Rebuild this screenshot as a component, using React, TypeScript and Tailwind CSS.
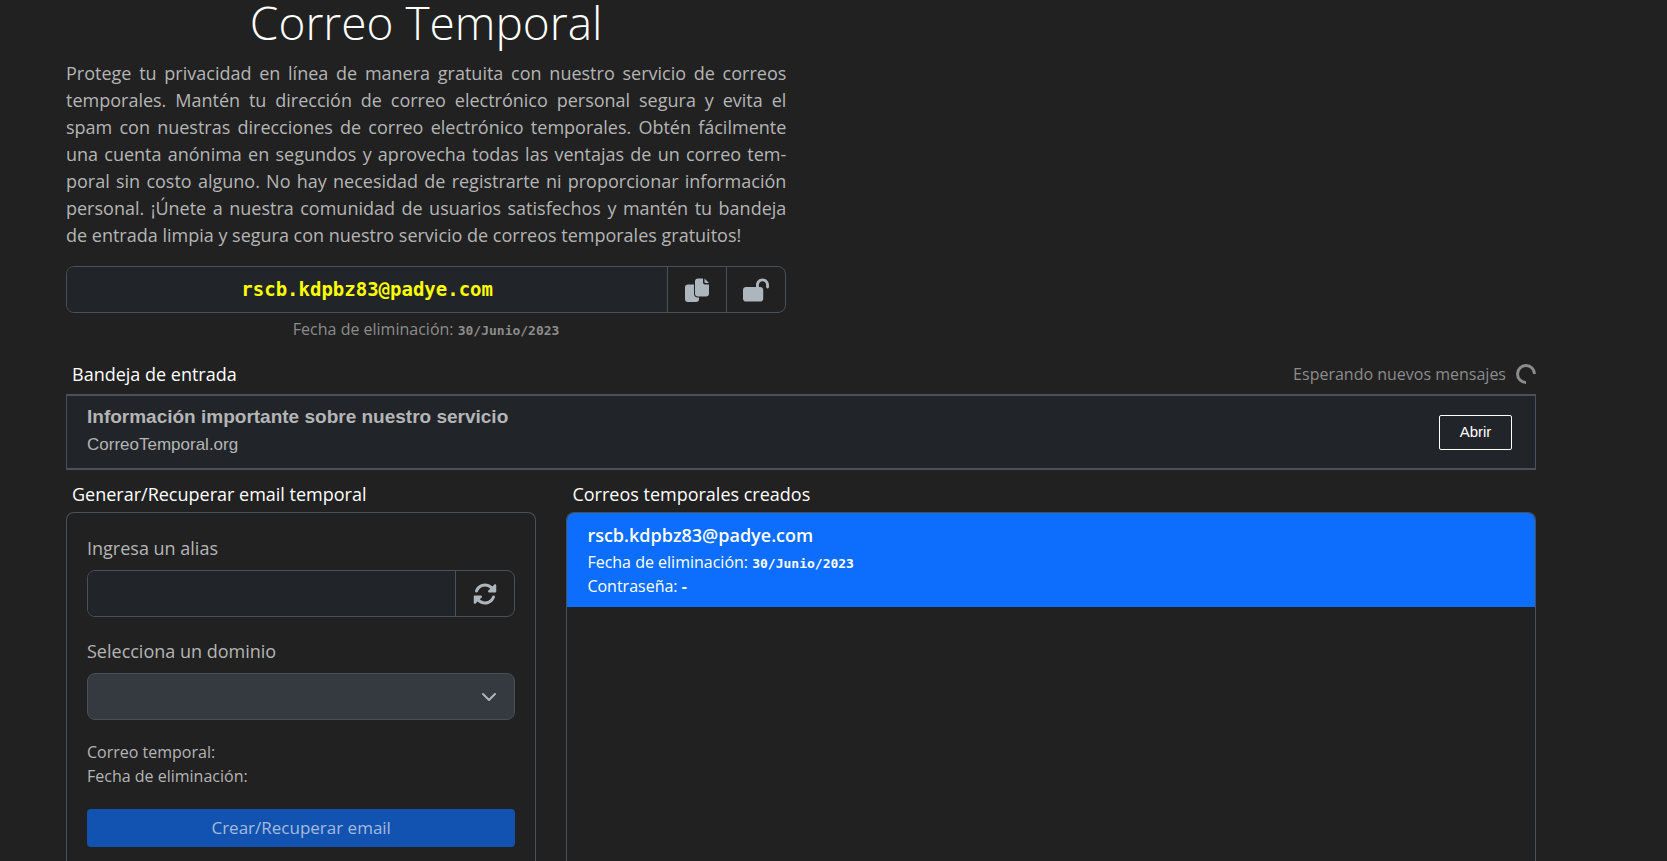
import React, { useState } from 'react';
import { FaLockOpen, FaRotate } from 'react-icons/fa6';

interface TempMail {
  address: string;
  expires: string;
  password: string;
}

const mails: TempMail[] = [
  { address: 'rscb.kdpbz83@padye.com', expires: '30/Junio/2023', password: '-' },
];

const CopyIcon = () => (
  <svg viewBox="0 0 24 24" className="h-6 w-6" fill="currentColor" aria-hidden="true">
    <path d="M3 6.500h6v9a4 4 0 0 0 4 4h1V21a3 3 0 0 1-3 3H3a3 3 0 0 1-3-3V9.500a3 3 0 0 1 3-3z" />
    <path d="M13 .500h5v4a2 2 0 0 0 2 2h4v9a3 3 0 0 1-3 3h-8a3 3 0 0 1-3-3v-12a3 3 0 0 1 3-3z" />
    <path d="M19.500 .500 24 5h-3.500a1 1 0 0 1-1-1z" />
  </svg>
);

const ChevronIcon = () => (
  <svg viewBox="0 0 16 16" className="pointer-events-none absolute top-4 right-[18px] h-4 w-4 text-[#adb5bd]" fill="none" stroke="currentColor" strokeWidth="2" strokeLinecap="round" strokeLinejoin="round" aria-hidden="true">
    <path d="m2 5 6 6 6-6" />
  </svg>
);

const Spinner = () => (
  <svg viewBox="0 0 20 20" className="h-5 w-5" fill="none" stroke="currentColor" strokeWidth="3" aria-hidden="true">
    <path d="M10 18.500A8.500 8.500 0 1 1 18.500 10" />
  </svg>
);

const ExpiryDate = ({ date }: { date: string }) => (
  <span className="font-['DejaVu_Sans_Mono',monospace] text-[13px] font-bold">{date}</span>
);

export default function App() {
  const [alias, setAlias] = useState('');
  const [domain, setDomain] = useState('');
  const current = mails[0];

  return (
    <div className="h-screen overflow-hidden bg-[#212121] pr-[131px] pl-[66px] font-['Open_Sans',sans-serif] text-[#b5b5b5]">
      {/* Intro */}
      <section className="w-[49%]">
        <h1 className="text-center text-[46px] leading-[44px] font-light text-white">Correo Temporal</h1>
        <p lang="es" className="mt-4 text-justify text-lg leading-[27px]">
          Protege tu privacidad en línea de manera gratuita con nuestro servicio de correos temporales. Mantén tu
          dirección de correo electrónico personal segura y evita el spam con nuestras direcciones de correo electrónico
          temporales. Obtén fácilmente una cuenta anónima en segundos y aprovecha todas las ventajas de un correo
          tem&shy;poral sin costo alguno. No hay necesidad de registrarte ni proporcionar información personal. ¡Únete a
          nuestra comunidad de usuarios satisfechos y mantén tu bandeja de entrada limpia y segura con nuestro servicio
          de correos temporales gratuitos!
        </p>

        <div className="mt-[17px] flex h-[47px] overflow-hidden rounded-lg border border-[#495057]">
          <input
            readOnly
            aria-label="Correo temporal"
            value={current.address}
            className="min-w-0 flex-1 bg-[#212529] text-center font-['DejaVu_Sans_Mono',monospace] text-[19px] font-bold text-[#ffff00] outline-none"
          />
          <button type="button" aria-label="Copiar" className="flex w-[59px] items-center justify-center border-l border-[#495057] text-[#adb5bd]">
            <CopyIcon />
          </button>
          <button type="button" aria-label="Proteger" className="flex w-[59px] items-center justify-center border-l border-[#495057] text-[#adb5bd]">
            <FaLockOpen className="h-6 w-[26px]" />
          </button>
        </div>
        <p className="mt-1 text-center text-base leading-6 text-[#8c8c8c]">
          Fecha de eliminación: <ExpiryDate date={current.expires} />
        </p>
      </section>

      {/* Inbox */}
      <section className="mt-[17px]">
        <div className="flex items-center justify-between pl-1.5">
          <h2 className="text-lg leading-7 text-white">Bandeja de entrada</h2>
          <div className="flex items-center gap-2.5 text-base leading-7 text-[#8c8c8c]">
            <span>Esperando nuevos mensajes</span>
            <Spinner />
          </div>
        </div>
        <div className="mt-1.5 flex h-[76px] items-center justify-between border-x border-y-2 border-[#495057] bg-[#212529] pr-[23px] pl-5 font-['Liberation_Sans',sans-serif]">
          <div className="pb-0.5">
            <p className="text-[19px] leading-7 font-bold">Información importante sobre nuestro servicio</p>
            <p className="text-[17px] leading-7">CorreoTemporal.org</p>
          </div>
          <button type="button" className="h-[35px] w-[73px] rounded-xs border border-white text-[15px] text-white">
            Abrir
          </button>
        </div>
      </section>

      <div className="mt-2.5 flex gap-[30px]">
        {/* Generator form */}
        <section className="w-[32%]">
          <h2 className="pl-1.5 text-lg leading-7 text-white">Generar/Recuperar email temporal</h2>
          <form className="mt-1 rounded-t-lg border border-b-0 border-[#495057] px-5 pt-[21px] pb-10" onSubmit={(e) => e.preventDefault()}>
            <label htmlFor="alias" className="block text-lg leading-7">Ingresa un alias</label>
            <div className="mt-2 flex h-[47px] overflow-hidden rounded-lg border border-[#495057]">
              <input
                id="alias"
                value={alias}
                onChange={(e) => setAlias(e.target.value)}
                className="min-w-0 flex-1 bg-[#212529] px-4 text-lg outline-none"
              />
              <button type="button" aria-label="Generar alias" className="flex w-[59px] items-center justify-center border-l border-[#495057] text-[#adb5bd]">
                <FaRotate className="h-6 w-6" />
              </button>
            </div>

            <label htmlFor="domain" className="mt-5 block text-lg leading-7">Selecciona un dominio</label>
            <div className="relative mt-2">
              <select
                id="domain"
                value={domain}
                onChange={(e) => setDomain(e.target.value)}
                className="block h-[47px] w-full appearance-none rounded-lg border border-[#495057] bg-[#343a40] px-4 text-lg outline-none"
              >
                <option value=""></option>
              </select>
              <ChevronIcon />
            </div>

            <div className="mt-5 text-base leading-6">
              <p>Correo temporal:</p>
              <p>Fecha de eliminación:</p>
            </div>
            <button type="submit" disabled className="mt-[21px] h-[38px] w-full rounded-sm bg-[#1253b1] text-[17px] text-[#a6bbdb]">
              Crear/Recuperar email
            </button>
          </form>
        </section>

        {/* Created addresses */}
        <section className="flex flex-1 flex-col">
          <h2 className="pl-1.5 text-lg leading-7 text-white">Correos temporales creados</h2>
          <ul className="mt-1 flex-1 overflow-hidden rounded-t-lg border border-b-0 border-[#495057]">
            {mails.map((mail) => (
              <li key={mail.address} className="bg-[#0d6efd] px-5 pt-2 pb-2.5 text-white">
                <p className="text-lg leading-7 font-semibold">{mail.address}</p>
                <p className="mt-0.5 text-base leading-[22px]">
                  Fecha de eliminación: <ExpiryDate date={mail.expires} />
                </p>
                <p className="text-base leading-[22px]">
                  Contraseña: <b>{mail.password}</b>
                </p>
              </li>
            ))}
          </ul>
        </section>
      </div>
    </div>
  );
}
